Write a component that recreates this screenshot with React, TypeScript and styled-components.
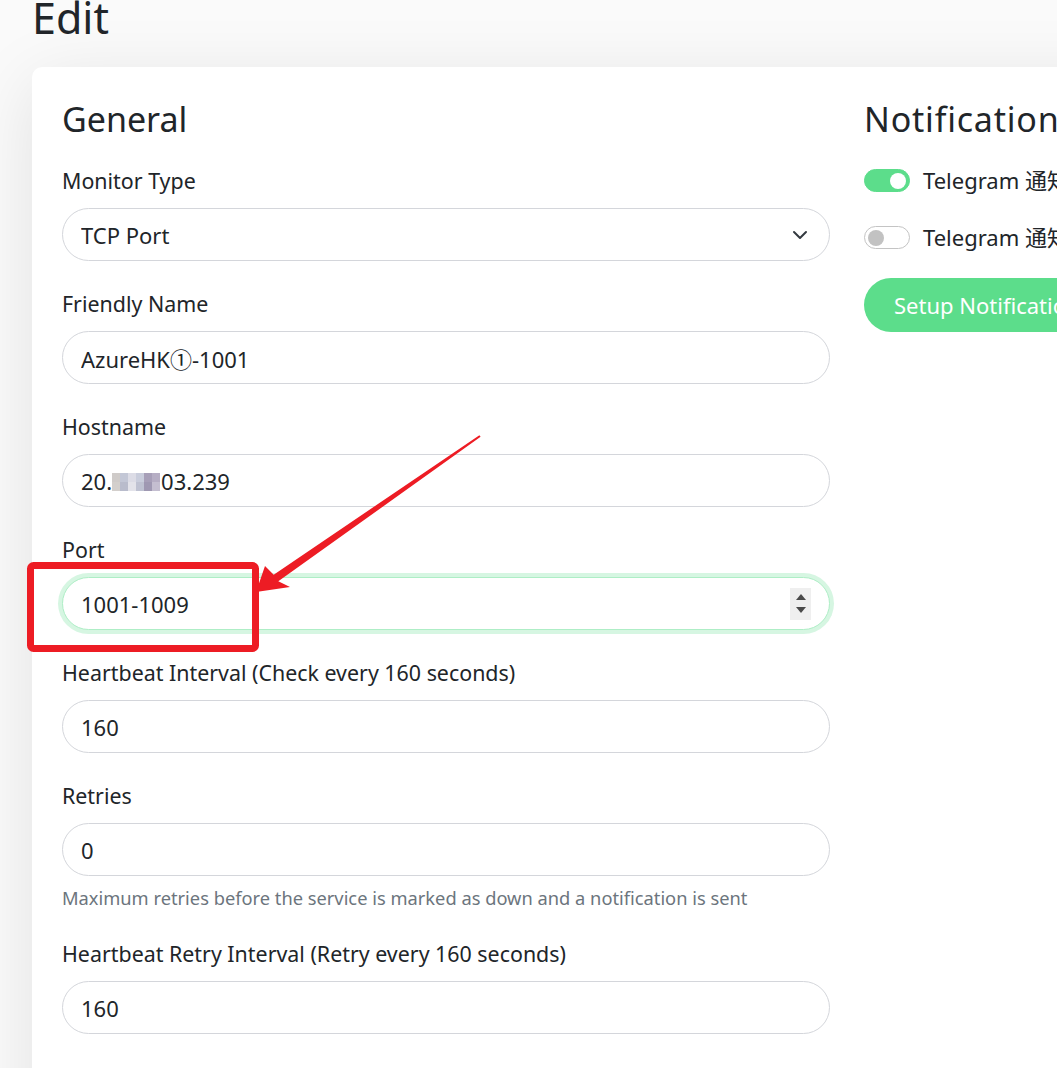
import React from "react";
import styled, { createGlobalStyle } from "styled-components";

const GlobalStyle = createGlobalStyle`
  html, body { margin: 0; padding: 0; }
  body {
    background: #fafafa;
    overflow: hidden;
    font-family: "Noto Sans", "Noto Sans CJK SC", sans-serif;
    color: #212529;
  }
  * { box-sizing: border-box; }
`;

const Page = styled.div`
  position: relative;
  width: 1057px;
  height: 1068px;
  overflow: hidden;
  padding-left: 32px;
`;

const PageTitle = styled.h1`
  margin: -8px 0 23px 0;
  font-size: 43px;
  font-weight: 400;
  line-height: 1.2;
`;

const Card = styled.div`
  width: 1630px;
  min-height: 1100px;
  background: #fff;
  border-radius: 10px;
  box-shadow: 0 15px 70px rgba(0, 0, 0, 0.1);
  padding: 32px 30px;
`;

const Columns = styled.div`
  display: grid;
  grid-template-columns: 768px 768px;
  column-gap: 34px;
  align-items: start;
`;

const Column = styled.div`
  display: flex;
  flex-direction: column;
  align-items: flex-start;
`;

const FormColumn = styled.div`
  display: flex;
  flex-direction: column;
`;

const SectionTitle = styled.h2<{ $spread?: boolean }>`
  margin: 0 0 25px;
  font-size: 34px;
  font-weight: 400;
  line-height: 1.2;
  white-space: nowrap;
  letter-spacing: ${(p) => (p.$spread ? "0.8px" : "0")};
`;

const Field = styled.div`
  margin-bottom: 26px;
`;

const Label = styled.label`
  display: block;
  font-size: 21.4px;
  line-height: 33px;
  margin-bottom: 11px;
`;

const Box = styled.div<{ $focused?: boolean; $padRight?: number }>`
  display: flex;
  align-items: center;
  height: 53px;
  border: 1px solid ${(p) => (p.$focused ? "#aeeec6" : "#d4d6db")};
  border-radius: 27px;
  background: #fff;
  padding: 0 ${(p) => p.$padRight ?? 18}px 0 18px;
  box-shadow: ${(p) => (p.$focused ? "0 0 0 4px rgba(92, 221, 139, 0.25)" : "none")};
`;

const TextInput = styled.input`
  flex: 1;
  min-width: 0;
  border: 0;
  outline: none;
  background: transparent;
  font-family: inherit;
  font-size: 22px;
  color: #212529;
  padding: 0;
`;

const Select = styled.select`
  flex: 1;
  min-width: 0;
  appearance: none;
  border: 0;
  outline: none;
  background: transparent;
  font-family: inherit;
  font-size: 22px;
  color: #212529;
  padding: 0;
`;

const ValueText = styled.span`
  font-size: 22px;
  color: #212529;
  white-space: nowrap;
  display: flex;
  align-items: center;
`;

const Mosaic = styled.span`
  display: inline-grid;
  grid-template-columns: repeat(6, 8px);
  grid-template-rows: 9px 9px;
  margin: 0 1px 0 0;
  transform: translateY(1px);
`;

const Cell = styled.span<{ $c: string }>`
  background: ${(p) => p.$c};
`;

const Spinner = styled.span`
  display: flex;
  flex-direction: column;
  align-items: center;
  justify-content: center;
  gap: 7px;
  width: 21px;
  height: 32px;
  background: #efefef;
`;

const Tri = styled.span<{ $down?: boolean }>`
  width: 0;
  height: 0;
  border-left: 5px solid transparent;
  border-right: 5px solid transparent;
  ${(p) =>
    p.$down ? "border-top: 6px solid #4a4a4a;" : "border-bottom: 6px solid #4a4a4a;"}
`;

const HelpText = styled.div`
  margin-top: 9px;
  font-size: 18.3px;
  line-height: 1.4;
  color: #6c757d;
  white-space: nowrap;
`;

const ToggleRow = styled.div`
  display: flex;
  align-items: center;
  gap: 13px;
  font-size: 22px;
  line-height: 33px;
  margin-bottom: 24px;
  white-space: nowrap;
`;

const Switch = styled.span<{ $on: boolean }>`
  display: flex;
  align-items: center;
  justify-content: ${(p) => (p.$on ? "flex-end" : "flex-start")};
  width: 46px;
  height: 23px;
  border-radius: 12px;
  padding: 0 3px;
  background: ${(p) => (p.$on ? "#5cdd8b" : "#fff")};
  border: 1px solid ${(p) => (p.$on ? "#5cdd8b" : "#c4c4c4")};
`;

const Knob = styled.span<{ $on: boolean }>`
  width: 16px;
  height: 16px;
  border-radius: 50%;
  background: ${(p) => (p.$on ? "#fff" : "#c2c2c2")};
`;

const PrimaryButton = styled.button`
  height: 54px;
  padding: 0 30px;
  border: 0;
  border-radius: 27px;
  background: #5cdd8b;
  color: #fff;
  font-family: inherit;
  font-size: 22px;
  white-space: nowrap;
`;

const Annotation = styled.svg`
  position: absolute;
  top: 0;
  left: 0;
  width: 1057px;
  height: 1068px;
  pointer-events: none;
`;

const mosaicColors = [
  "#cfcbc9", "#c3c7d6", "#dcdce6", "#c9cddc", "#a79fb8", "#b6aec4",
  "#d3cfcc", "#b9bccc", "#e3e3ea", "#bfc2d2", "#9f98b2", "#c4bed0",
];

const Chevron = () => (
  <svg width="16" height="16" viewBox="0 0 16 16" fill="none">
    <polyline points="2,5 8,11 14,5" stroke="#343a40" strokeWidth="2" strokeLinecap="round" strokeLinejoin="round" />
  </svg>
);

export default function App() {
  return (
    <>
      <GlobalStyle />
      <Page>
        <PageTitle>Edit</PageTitle>
        <Card>
          <Columns>
            <FormColumn>
              <SectionTitle>General</SectionTitle>

              <Field>
                <Label>Monitor Type</Label>
                <Box $padRight={21}>
                  <Select defaultValue="port">
                    <option value="port">TCP Port</option>
                  </Select>
                  <Chevron />
                </Box>
              </Field>

              <Field>
                <Label>Friendly Name</Label>
                <Box>
                  <TextInput defaultValue="AzureHK①-1001" />
                </Box>
              </Field>

              <Field>
                <Label>Hostname</Label>
                <Box>
                  <ValueText>
                    20.
                    <Mosaic>
                      {mosaicColors.map((c, i) => (
                        <Cell key={i} $c={c} />
                      ))}
                    </Mosaic>
                    03.239
                  </ValueText>
                </Box>
              </Field>

              <Field>
                <Label>Port</Label>
                <Box $focused>
                  <TextInput defaultValue="1001-1009" />
                  <Spinner>
                    <Tri />
                    <Tri $down />
                  </Spinner>
                </Box>
              </Field>

              <Field>
                <Label>Heartbeat Interval (Check every 160 seconds)</Label>
                <Box>
                  <TextInput defaultValue="160" />
                </Box>
              </Field>

              <Field>
                <Label>Retries</Label>
                <Box>
                  <TextInput defaultValue="0" />
                </Box>
                <HelpText>
                  Maximum retries before the service is marked as down and a notification is sent
                </HelpText>
              </Field>

              <Field>
                <Label>Heartbeat Retry Interval (Retry every 160 seconds)</Label>
                <Box>
                  <TextInput defaultValue="160" />
                </Box>
              </Field>
            </FormColumn>

            <Column>
              <SectionTitle $spread>Notifications</SectionTitle>
              <ToggleRow>
                <Switch $on>
                  <Knob $on />
                </Switch>
                Telegram 通知
              </ToggleRow>
              <ToggleRow>
                <Switch $on={false}>
                  <Knob $on={false} />
                </Switch>
                Telegram 通知
              </ToggleRow>
              <PrimaryButton>Setup Notification</PrimaryButton>
            </Column>
          </Columns>
        </Card>

        <Annotation viewBox="0 0 1057 1068">
          <rect x="30.5" y="565.5" width="225" height="83" rx="3" fill="none" stroke="#ed1c24" strokeWidth="7" />
          <polygon
            points="256,592 290,587 278.3,581.3 480.6,436.8 479.4,435.2 273.7,574.7 265,566"
            fill="#ed1c24"
          />
        </Annotation>
      </Page>
    </>
  );
}
